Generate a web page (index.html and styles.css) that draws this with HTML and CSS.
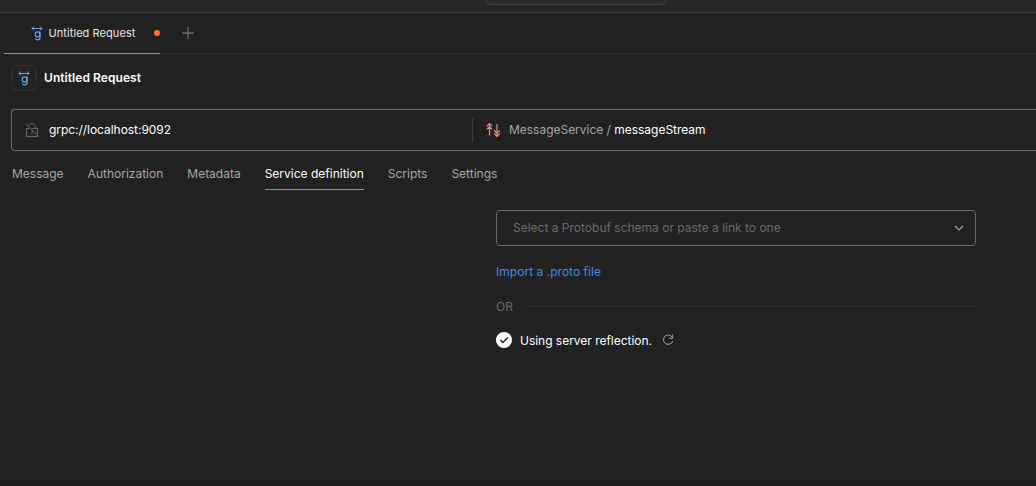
FILE: index.html
```html
<!DOCTYPE html>
<html lang="en">
<head>
<meta charset="utf-8">
<title>Untitled Request</title>
<link rel="stylesheet" href="styles.css">
</head>
<body>
<svg class="defs" width="0" height="0">
  <symbol id="grpc" viewBox="0 0 12 16">
    <path d="M1 3.500h10M3 1.500l-2 2 2 2M9 1.500l2 2-2 2"/>
    <path stroke-width="1.150" d="M9 6.600v6.200c0 1.300-.9 2-2.400 2-1.200 0-2-.4-2.300-1.200"/>
    <ellipse stroke-width="1.150" cx="6.600" cy="9.400" rx="2.400" ry="2.500"/>
  </symbol>
</svg>
<header class="topbar"><div class="search"></div></header>
<nav class="tabs">
  <div class="tab">
    <svg class="grpc" width="12" height="16"><use href="#grpc"/></svg>
    <span class="tab-name">Untitled Request</span>
    <span class="dot"></span>
  </div>
  <svg class="plus" width="12" height="12" viewBox="0 0 12 12"><path d="M6 0v12M0 6h12"/></svg>
</nav>
<section class="title">
  <span class="badge"><svg class="grpc" width="12" height="16"><use href="#grpc"/></svg></span>
  <h1>Untitled Request</h1>
</section>
<section class="address">
  <div class="url">
    <svg class="lock" width="16" height="16" viewBox="0 0 16 16"><path d="M5.300 3.600C5.700 2.300 6.700 1.500 8 1.500c1.700 0 3 1.300 3 3v2M5.500 6.500h-3v8h11M8 6.500h5.500v6M8 9v3M1.500 1.500l13 13"/></svg>
    <span>grpc://localhost:9092</span>
  </div>
  <div class="method">
    <svg class="stream" width="16" height="16" viewBox="0 0 16 16"><path d="M4.500 13.500v-12M1.700 4.300l2.800-2.800 2.800 2.800M1.700 7.300l2.800-2.800 2.800 2.800M12 2v12.300M9.200 11.500l2.800 2.800 2.800-2.800M9.200 8.500l2.800 2.800 2.800-2.800"/></svg>
    <span class="service">MessageService / <b>messageStream</b></span>
  </div>
</section>
<nav class="sections">
  <span>Message</span><span>Authorization</span><span>Metadata</span><span class="active">Service definition</span><span>Scripts</span><span>Settings</span>
</nav>
<main class="panel">
  <div class="select">
    <span>Select a Protobuf schema or paste a link to one</span>
    <svg width="10" height="6" viewBox="0 0 10 6"><path d="M1 1l4 4 4-4"/></svg>
  </div>
  <a class="import">Import a .proto file</a>
  <div class="or"><span>OR</span><i></i></div>
  <div class="reflection">
    <svg class="check" width="16" height="16" viewBox="0 0 16 16"><circle cx="8" cy="8" r="8"/><path d="M4.300 8l2.500 2.500 5-5"/></svg>
    <span>Using server reflection.</span>
    <svg class="refresh" width="12" height="12" viewBox="0 0 12 12"><path d="M10 2.900A4.700 4.700 0 1 0 10.700 7M10.700.5v3.700H7"/></svg>
  </div>
</main>
<footer class="bottom"></footer>
</body>
</html>
```

FILE: styles.css
```css
* { box-sizing: border-box; }
body {
  margin: 0;
  height: 486px;
  overflow: hidden;
  display: flex;
  flex-direction: column;
  background: #212121;
  color: #fff;
  font: 12px/16px Inter, sans-serif;
}
svg { flex: none; fill: none; stroke-width: 1; }
.defs { position: absolute; }
.topbar { height: 13px; flex: none; background: #262626; border-bottom: 1px solid #3b3b3b; }
.search {
  width: 180px;
  height: 5px;
  margin-left: 486px;
  background: #2b2b2b;
  border: 1px solid #3b3b3b;
  border-top: 0;
  border-radius: 0 0 4px 4px;
}
.tabs { height: 41px; flex: none; display: flex; align-items: center; padding-left: 4px; border-bottom: 1px solid #303030; }
.tab {
  width: 156px;
  height: 41px;
  margin-bottom: -1px;
  padding-left: 27px;
  display: flex;
  align-items: center;
  border-bottom: 1px solid #ff6c37;
}
.grpc { stroke: #6ba3ea; }
.tab-name { margin-left: 5.5px; font-size: 11px; letter-spacing: 0.07px; color: #e6e6e6; }
.dot { width: 6px; height: 6px; margin-left: auto; border-radius: 50%; background: #ff6c37; }
.plus { margin-left: 22px; stroke: #858585; }
.title { height: 55px; flex: none; display: flex; align-items: flex-start; padding: 11px; }
.badge {
  width: 26px;
  height: 26px;
  display: flex;
  align-items: center;
  justify-content: center;
  border: 1px solid #303030;
  border-radius: 4px;
  background: #242424;
}
h1 { margin: 0 0 0 7px; font-size: 12px; line-height: 26px; font-weight: 600; letter-spacing: 0.06px; }
.address {
  height: 42px;
  flex: none;
  display: flex;
  align-items: center;
  margin-left: 11px;
  border: 1px solid #6b6b6b;
  border-right: 0;
  border-radius: 4px 0 0 4px;
}
.url { width: 461px; height: 24px; display: flex; align-items: center; padding-left: 12px; gap: 9px; border-right: 1px solid #3b3b3b; letter-spacing: -0.04px; }
.lock { stroke: #6b6b6b; }
.method { display: flex; align-items: center; padding-left: 12px; gap: 8px; letter-spacing: -0.02px; }
.stream { stroke: #e88a7c; stroke-width: 1.2; }
.service { color: #a6a6a6; }
.service b { color: #fff; font-weight: 400; }
.sections { display: flex; flex: none; gap: 24px; margin: 15px 0 0 12px; color: #a6a6a6; }
.sections span { height: 24px; }
.sections .active { color: #fff; border-bottom: 1px solid #ff6c37; }
.panel { width: 480px; margin: 20px 0 0 496px; }
.select {
  height: 36px;
  display: flex;
  align-items: center;
  justify-content: space-between;
  padding: 0 11px 0 16px;
  border: 1px solid #6b6b6b;
  border-radius: 4px;
  color: #6b6b6b;
}
.select svg { stroke: #a6a6a6; stroke-width: 1.2; }
.import { display: block; margin-top: 18px; color: #3d8fec; letter-spacing: 0.03px; }
.or { display: flex; align-items: center; margin-top: 19px; gap: 12px; color: #6b6b6b; }
.or i { flex: 1; height: 1px; margin-bottom: 2px; background: #303030; }
.reflection { height: 16px; display: flex; align-items: center; margin-top: 17px; }
.reflection span { margin-left: 8px; padding-top: 2px; letter-spacing: -0.02px; }
.check circle { fill: #fff; }
.check path { stroke: #212121; stroke-width: 1.5; }
.refresh { margin-left: 10px; stroke: #a6a6a6; }
.bottom { height: 3px; flex: none; margin-top: auto; background: #1c1c1c; }
```
